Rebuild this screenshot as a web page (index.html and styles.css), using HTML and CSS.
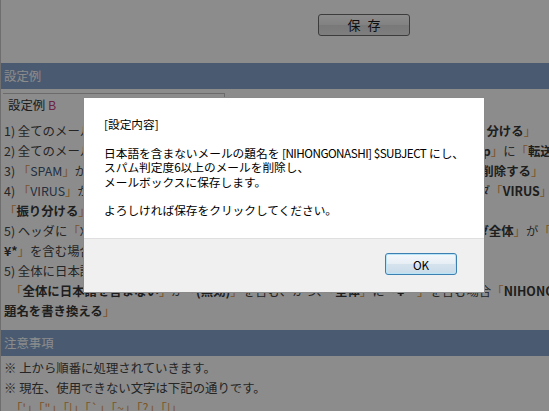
FILE: index.html
```html
<!DOCTYPE html>
<html lang="ja">
<head>
<meta charset="utf-8">
<title>設定例</title>
<link rel="stylesheet" href="styles.css">
</head>
<body>
<div class="page">
  <div class="toolbar"><button class="save-btn" type="button">保 存</button></div>
  <h2 class="section-head">設定例</h2>
  <div class="example-tab">設定例 <span class="tab-letter">B</span></div>
  <div class="rules">
    <p class="ln">1) 全てのメールの<span class="t">「<b>スパム判定度</b>」</span>が<span class="t">「<b>6以上</b>」</span>の場合は、<span class="t">「<b>SPAM</b>」</span>フォルダに<span class="t">「<b>振り分ける</b>」</span></p>
    <p class="ln">2) 全てのメールの<span class="t">「<b>送信者</b>」</span>に<span class="t">「<b>info@example.jp</b>」</span>を含む場合<span class="t">「<b>mail@example.jp</b>」</span>に<span class="t">「<b>転送する</b>」</span></p>
    <p class="ln">3) <span class="t">「<span class="tv">SPAM</span>」</span>が<span class="t">「<b>ヘッダ全体</b>」</span>に<span class="t">「<b>X-Spam-Level: *******</b>」</span>を含む場合、メールを<span class="t">「<b>削除する</b>」</span></p>
    <p class="ln">4) <span class="t">「<span class="tv">VIRUS</span>」</span>が<span class="t">「<b>ヘッダ全体</b>」</span>に<span class="t">「<b>X-Virus-Status: INFECTED</b>」</span>を含む場合、フォルダ<span class="t">「<b>VIRUS</b>」</span>に</p>
    <p class="ln"><span class="t">「<b>振り分ける</b>」</span></p>
    <p class="ln">5) ヘッダに<span class="t">「<span class="tv">X-Spam-Flag: YES</span>」</span>を含まない、かつ、<span class="t">「<b>送信者</b>」</span>が<span class="t">「<b>空白</b>」</span>で、<span class="t">「<b>ヘッダ全体</b>」</span>が<span class="t">「</span></p>
    <p class="ln"><span class="t"><b>¥*</b>」</span>を含む場合<span class="t">「<b>迷惑メール</b>」</span>に<span class="t">「<b>振り分ける</b>」</span></p>
    <p class="ln">5) 全体に日本語を含まないメールの題名を書き換える</p>
    <p class="ln">　<span class="t">「<b>全体に日本語を含まない</b>」</span>が<span class="t">「<b>(無効)</b>」</span>を含む、かつ、<span class="t">「<b>全体</b>」</span>に<span class="t">「<b>¥**</b>」</span>を含む場合<span class="t">「<b>NIHONGONASHI</b>」</span>に<span class="t">「</span></p>
    <p class="ln"><span class="t"><b>題名を書き換える</b>」</span></p>
  </div>
  <h2 class="section-head notes-head">注意事項</h2>
  <div class="notes">
    <p class="ln">※ 上から順番に処理されていきます。</p>
    <p class="ln">※ 現在、使用できない文字は下記の通りです。</p>
    <p class="ln">　<span class="t">「'」「"」「|」「`」「~」「?」「|」</span></p>
  </div>
</div>

<div class="backdrop"></div>
<div class="dialog" role="alertdialog">
  <div class="dialog-body">
    <p>[設定内容]</p>
    <p>日本語を含まないメールの題名を <span class="latin">[NIHONGONASHI] $SUBJECT</span> にし、<br>スパム判定度6以上のメールを削除し、<br>メールボックスに保存します。</p>
    <p>よろしければ保存をクリックしてください。</p>
  </div>
  <div class="dialog-foot"><button class="ok-btn" type="button">OK</button></div>
</div>
</body>
</html>
```
FILE: styles.css
```css
html, body {
  margin: 0;
  height: 100%;
  overflow: hidden;
}
body {
  font-family: "Noto Sans CJK JP", "Noto Sans", sans-serif;
  font-size: 12.4px;
  color: #444;
  background: #fff;
}
.page {
  min-height: 100%;
  border-left: 1px solid #c8c8c8;
}
.toolbar {
  display: flex;
  padding: 14px 0 27px 317px;
}
.save-btn {
  width: 92px;
  height: 22px;
  box-sizing: border-box;
  border: 1px solid #6e6e6e;
  border-radius: 3px;
  background: linear-gradient(#fefefe, #ececec 50%, #dcdcdc 50%, #e6e6e6);
  font-family: "Noto Sans CJK JP", sans-serif;
  font-size: 13px;
  line-height: 18px;
  letter-spacing: 2px;
  padding: 0 0 0 2px;
  color: #1a1a1a;
}
.section-head {
  margin: 0;
  height: 26px;
  line-height: 26px;
  padding-left: 3px;
  font-size: 12.4px;
  font-weight: normal;
  background: #87a4cc;
  color: #fff;
}
.example-tab {
  width: 222px;
  height: 23px;
  box-sizing: border-box;
  margin: 4px 0 0 2px;
  border-top: 1px solid #c4c4c4;
  border-right: 1px solid #c4c4c4;
  padding-left: 5px;
  line-height: 22px;
  color: #333;
}
.tab-letter {
  color: #c8407f;
}
.rules {
  padding-top: 5px;
}
.ln {
  margin: 0;
  padding-left: 3px;
  line-height: 20px;
  white-space: nowrap;
}
.t {
  color: #e39b49;
}
.t b {
  color: #383838;
  font-weight: 700;
}
.tv {
  color: #3f5878;
}
.notes-head {
  margin-top: 9px;
}
.notes {
  padding-top: 2px;
}
.backdrop {
  position: fixed;
  inset: 0;
  background: rgba(0, 0, 0, 0.45);
}
.dialog {
  position: fixed;
  left: 83px;
  top: 97px;
  width: 402px;
  height: 196px;
  box-sizing: border-box;
  border: 1px solid #8a8a8a;
  background: #f0f0f0;
  display: flex;
  flex-direction: column;
  font-family: "Noto Sans CJK JP", sans-serif;
  font-size: 11.7px;
  color: #000;
}
.dialog-body {
  height: 140px;
  box-sizing: border-box;
  background: #fff;
  padding: 19px 10px 0 20px;
  line-height: 14.4px;
  white-space: nowrap;
}
.dialog-body p {
  margin: 0 0 14.4px;
}
.latin {
  letter-spacing: -0.5px;
}
.dialog-foot {
  flex: 1;
  border-top: 1px solid #dfdfdf;
  display: flex;
  justify-content: flex-end;
  align-items: flex-start;
  padding: 14px 27px 0 0;
}
.ok-btn {
  width: 72px;
  height: 22px;
  box-sizing: border-box;
  border: 1px solid #3c7fb1;
  border-radius: 3px;
  background: linear-gradient(#f4f8fb, #e6eef5 50%, #d5e3ee 50%, #c9dbe9);
  box-shadow: inset 0 0 0 1px #b9e3f7;
  font-family: "Noto Sans CJK JP", sans-serif;
  font-size: 11.7px;
  color: #000;
  padding: 0;
}
```
